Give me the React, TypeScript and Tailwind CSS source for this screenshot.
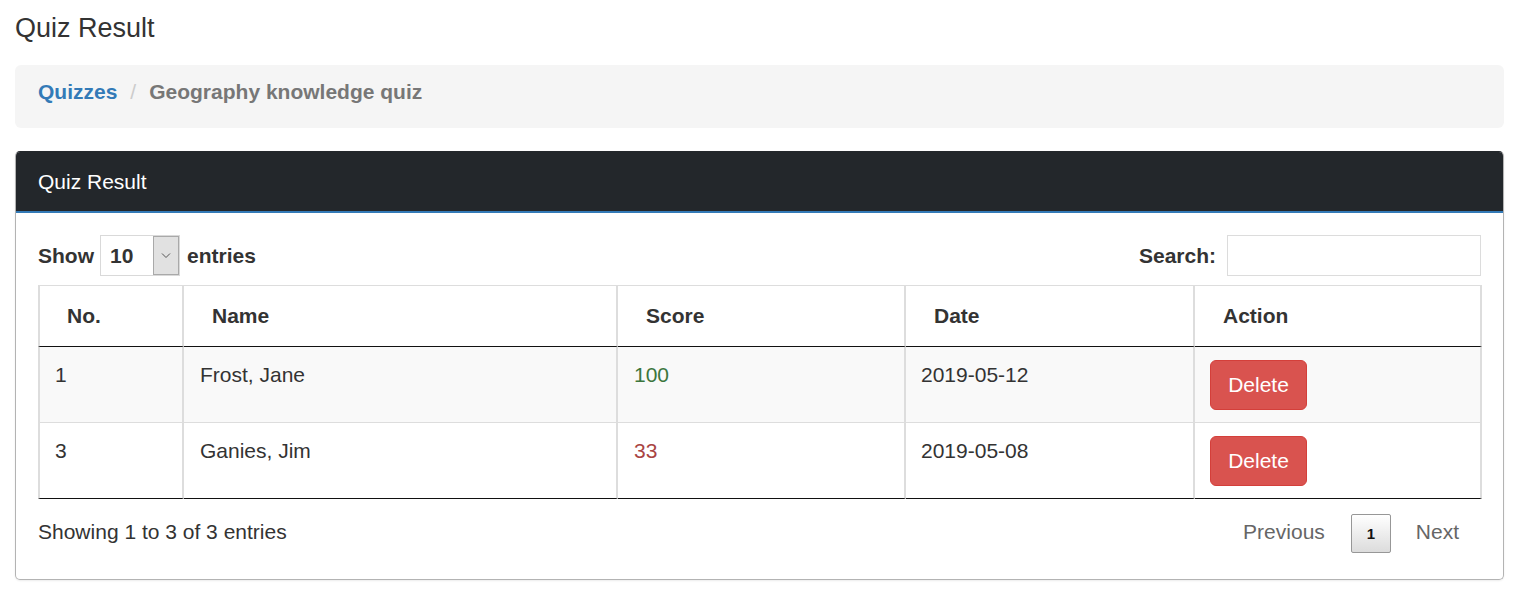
import React from "react";

const rows = [
  { no: "1", name: "Frost, Jane", score: "100", scoreColor: "text-[#3c763d]", date: "2019-05-12", bg: "bg-[#f9f9f9]", last: false },
  { no: "3", name: "Ganies, Jim", score: "33", scoreColor: "text-[#a94442]", date: "2019-05-08", bg: "bg-white", last: true },
];

export default function App() {
  return (
    <div
      className="min-h-[605px] bg-white px-[15px] text-[#333] text-[21px] leading-[30px]"
      style={{ fontFamily: '"Liberation Sans", Arial, Helvetica, sans-serif' }}
    >
      <div className="pt-[10px] text-[27px] leading-[36px]">Quiz Result</div>

      <div className="mt-[19px] h-[63px] rounded-[6px] bg-[#f5f5f5] px-[23px] pt-[12px] font-bold flex">
        <span className="text-[#337ab7]">Quizzes</span>
        <span className="mx-[13px] font-normal text-[#ccc]">/</span>
        <span className="text-[#777]">Geography knowledge quiz</span>
      </div>

      <div className="mt-[23px] overflow-hidden rounded-[5px] border border-[#b3b3b3] border-t-[#23272b] shadow-[0_1px_2px_rgba(0,0,0,0.08)]">
        <div className="bg-[#23272b] border-b-2 border-[#337ab7] px-[22px] pt-[15px] pb-[14px] text-white">
          Quiz Result
        </div>

        <div className="px-[22px] pt-[22px] pb-[26px]">
          <div className="flex h-[41px] items-center justify-between">
            <div className="flex items-center font-bold">
              <span>Show</span>
              <div className="ml-[6px] flex h-[41px] w-[80px] border border-[#d9d9d9] bg-white">
                <div className="flex flex-1 items-center pl-[9px] font-bold">10</div>
                <div className="flex w-[26px] items-center justify-center border border-[#a9a9a9] bg-[#e1e1e1]">
                  <svg width="10" height="7" viewBox="0 0 10 7" fill="none">
                    <path d="M1 1.5l4 4 4-4" stroke="#555" strokeWidth="1" />
                  </svg>
                </div>
              </div>
              <span className="ml-[7px]">entries</span>
            </div>
            <div className="flex items-center font-bold">
              <span>Search:</span>
              <div className="ml-[11px] h-[41px] w-[254px] border border-[#dcdcdc] bg-white" />
            </div>
          </div>

          <table className="mt-[9px] w-full table-fixed border-separate border-spacing-0">
            <colgroup>
              <col className="w-[146px]" />
              <col className="w-[434px]" />
              <col className="w-[288px]" />
              <col className="w-[289px]" />
              <col className="w-[287px]" />
            </colgroup>
            <thead>
              <tr>
                {["No.", "Name", "Score", "Date", "Action"].map((h, i) => (
                  <th
                    key={h}
                    className={
                      i === 0
                        ? "border-l-2 border-r-2 border-t border-b border-l-[#ddd] border-r-[#ddd] border-t-[#ddd] border-b-[#111] pl-[27px] py-[15px] text-left font-bold"
                        : "border-r-2 border-t border-b border-r-[#ddd] border-t-[#ddd] border-b-[#111] pl-[28px] py-[15px] text-left font-bold"
                    }
                  >
                    {h}
                  </th>
                ))}
              </tr>
            </thead>
            <tbody>
              {rows.map((r) => (
                <tr key={r.no} className={r.bg}>
                  <td
                    className={
                      r.last
                        ? "border-l-2 border-r-2 border-b border-l-[#ddd] border-r-[#ddd] border-b-[#111] pl-[15px] pt-[13px] pb-[12px] align-top"
                        : "border-l-2 border-r-2 border-b border-l-[#ddd] border-r-[#ddd] border-b-[#ddd] pl-[15px] pt-[13px] pb-[12px] align-top"
                    }
                  >
                    {r.no}
                  </td>
                  <td
                    className={
                      r.last
                        ? "border-r-2 border-b border-r-[#ddd] border-b-[#111] pl-[16px] pt-[13px] pb-[12px] align-top"
                        : "border-r-2 border-b border-r-[#ddd] border-b-[#ddd] pl-[16px] pt-[13px] pb-[12px] align-top"
                    }
                  >
                    {r.name}
                  </td>
                  <td
                    className={
                      (r.last
                        ? "border-r-2 border-b border-r-[#ddd] border-b-[#111] pl-[16px] pt-[13px] pb-[12px] align-top "
                        : "border-r-2 border-b border-r-[#ddd] border-b-[#ddd] pl-[16px] pt-[13px] pb-[12px] align-top ") + r.scoreColor
                    }
                  >
                    {r.score}
                  </td>
                  <td
                    className={
                      r.last
                        ? "border-r-2 border-b border-r-[#ddd] border-b-[#111] pl-[15px] pt-[13px] pb-[12px] align-top"
                        : "border-r-2 border-b border-r-[#ddd] border-b-[#ddd] pl-[15px] pt-[13px] pb-[12px] align-top"
                    }
                  >
                    {r.date}
                  </td>
                  <td
                    className={
                      r.last
                        ? "border-r-2 border-b border-r-[#ddd] border-b-[#111] pl-[15px] pt-[13px] pb-[12px] align-top"
                        : "border-r-2 border-b border-r-[#ddd] border-b-[#ddd] pl-[15px] pt-[13px] pb-[12px] align-top"
                    }
                  >
                    <button className="flex h-[50px] w-[97px] items-center justify-center rounded-[6px] border border-[#d43f3a] bg-[#d9534f] text-white">
                      Delete
                    </button>
                  </td>
                </tr>
              ))}
            </tbody>
          </table>

          <div className="mt-[15px] flex h-[39px] items-center justify-between">
            <span className="-mt-[4px]">Showing 1 to 3 of 3 entries</span>
            <div className="flex items-center text-[#666]">
              <span className="-mt-[4px]">Previous</span>
              <span className="ml-[26px] flex h-[39px] w-[40px] items-center justify-center rounded-[2px] border border-[#979797] bg-gradient-to-b from-white to-[#dcdcdc] text-[15px] font-bold text-[#111]">
                1
              </span>
              <span className="-mt-[4px] ml-[25px] mr-[22px]">Next</span>
            </div>
          </div>
        </div>
      </div>
    </div>
  );
}
